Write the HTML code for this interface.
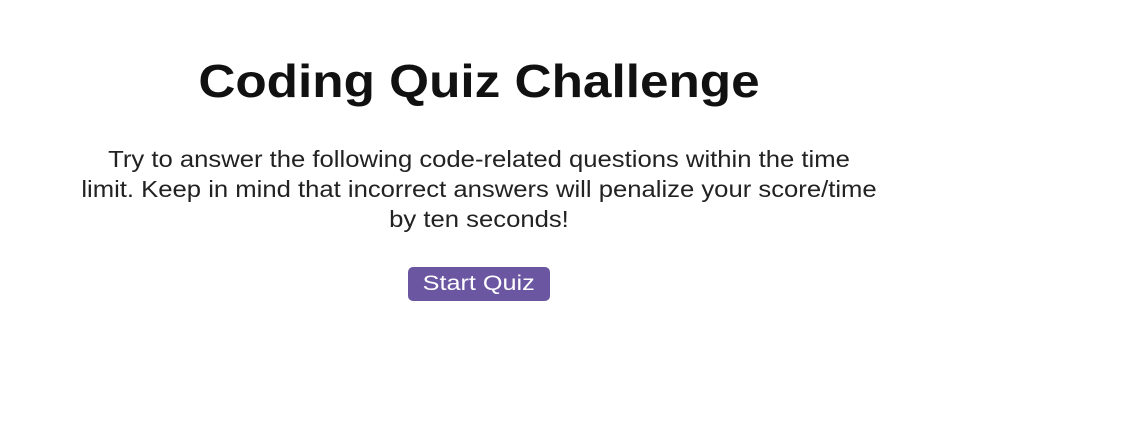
<!DOCTYPE html>
<html><head><style>
body{margin:0;width:1138px;height:422px;background:#fff;font-family:"Liberation Sans",Arial,sans-serif;color:#111;overflow:hidden;position:relative}
.w{position:absolute;left:0;width:958px;transform:scaleX(1.115);transform-origin:479px 0}
h1{top:51px;margin:0;text-align:center;font-size:46px;font-weight:bold;line-height:60px}
p{top:144px;margin:0;text-align:center;font-size:23px;line-height:30px;color:#222}
.btn{position:absolute;left:408px;top:267px;width:142px;height:34px;background:#6b56a2;border-radius:5px;color:#fff;font-size:21px;line-height:34px;text-align:center}
.btn span{display:inline-block;transform:scaleX(1.2)}
</style></head><body>
<h1 class="w">Coding Quiz Challenge</h1>
<p class="w">Try to answer the following code-related questions within the time<br>limit. Keep in mind that incorrect answers will penalize your score/time<br>by ten seconds!</p>
<div class="btn"><span>Start Quiz</span></div>
</body></html>
